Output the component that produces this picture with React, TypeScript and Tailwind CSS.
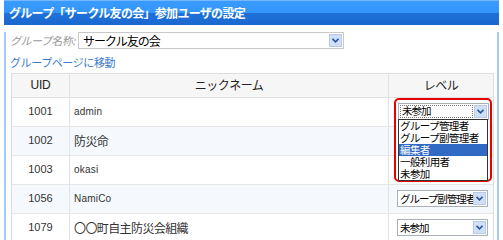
import React from "react";

const JP = "font-['Noto_Sans_CJK_JP','Noto_Sans_CJK_SC',sans-serif]";

const ROWS = [
  { uid: "1001", name: "admin", level: "未参加", open: true },
  { uid: "1002", name: "防災命", level: "" },
  { uid: "1003", name: "okasi", level: "" },
  { uid: "1056", name: "NamiCo", level: "グループ副管理者" },
  { uid: "1079", name: "〇〇町自主防災会組織", level: "未参加" },
];

const OPTIONS = ["グループ管理者", "グループ副管理者", "編集者", "一般利用者", "未参加"];

function Arrow() {
  return (
    <div className="flex h-[13px] w-[13px] shrink-0 items-center justify-center border border-[#b7cbe9] bg-[#cfdff7]">
      <svg width="7" height="5" viewBox="0 0 7 5">
        <path d="M0.5 0.8 L3.5 3.8 L6.5 0.8" fill="none" stroke="#2d55a0" strokeWidth="1.6" />
      </svg>
    </div>
  );
}

function Select({ label, focused }: { label: string; focused?: boolean }) {
  return (
    <div className="flex h-[17px] w-[91px] items-center border border-[#a9b0b9] bg-white pr-[1px]">
      <div
        className={
          "mx-[1px] flex h-[13px] min-w-0 flex-1 items-center whitespace-nowrap pl-[1px] text-[10.5px] leading-[12px] tracking-[-1px] text-black " +
          (focused ? "border border-dotted border-[#777]" : "")
        }
      >
        {label}
      </div>
      <Arrow />
    </div>
  );
}

export default function App() {
  return (
    <div className={"h-[240px] w-[503px] overflow-hidden bg-white text-[#333] " + JP}>
      <div className="ml-[4px] w-[495px]">
        {/* Title bar */}
        <div className="flex h-[25px] items-center border-t border-[#74b8ff] bg-[linear-gradient(#3a9bff_0%,#3396fb_48%,#1f71d9_52%,#1a68cf_100%)] pl-[5px]">
          <span className="whitespace-nowrap text-[12px] font-bold tracking-[-0.7px] text-white">
            グループ「サークル友の会」参加ユーザの設定
          </span>
        </div>

        <div className="h-[215px] border-x-2 border-[#a3cbf3] px-[4px]">
          {/* Group name */}
          <div className="mt-[7px] flex items-center">
            <span className="w-[68px] whitespace-nowrap text-[11px] italic tracking-[-0.5px] text-[#999]">グループ名称:</span>
            <div className="flex h-[17px] w-[266px] items-center border border-[#c8c8c8] bg-white pr-[1px]">
              <span className="flex-1 whitespace-nowrap pl-[4px] text-[12px] tracking-[-1px] text-black">サークル友の会</span>
              <Arrow />
            </div>
          </div>

          <div className="mt-[5px] whitespace-nowrap text-[11px] tracking-[-0.4px] text-[#3a7bd0]">グループページに移動</div>

          {/* Table */}
          <div className="mt-[2px] ml-[1px] w-[483px] border-x border-t border-[#dedede]">
            <div className="grid h-[24px] grid-cols-[58px_319px_104px] border-b border-[#e2e2e2] bg-[#f6f6f6] text-[12px] text-[#222]">
              <div className="flex items-center justify-center border-r border-[#e2e2e2] font-['Liberation_Sans',sans-serif] tracking-[-0.3px]">UID</div>
              <div className="flex items-center justify-center border-r border-[#e2e2e2] tracking-[-0.5px]">ニックネーム</div>
              <div className="flex items-center justify-center tracking-[-0.5px]">レベル</div>
            </div>
            {ROWS.map((r, i) => (
              <div
                key={r.uid}
                className={
                  "grid h-[29px] grid-cols-[58px_319px_104px] border-b border-[#e6e6e6] " +
                  (i % 2 === 1 ? "bg-[#f5f9fd]" : "bg-white")
                }
              >
                <div className="flex items-center justify-center border-r border-[#e2e2e2] font-['Liberation_Sans',sans-serif] text-[11px]">
                  {r.uid}
                </div>
                <div
                  className={
                    "flex items-center whitespace-nowrap border-r border-[#e2e2e2] pl-[4px] " +
                    (/^[A-Za-z]/.test(r.name)
                      ? "font-['Liberation_Sans',sans-serif] text-[10px] tracking-[0.2px]"
                      : "text-[12px] tracking-[-0.6px]")
                  }
                >
                  {r.name}
                </div>
                <div className="relative flex items-center pl-[8px]">
                  {r.level && !r.open && <Select label={r.level} />}
                  {r.open && (
                    <div className="absolute left-[5px] top-[0px] z-10 h-[84px] w-[98px] rounded-[5px] border-2 border-[#e60000] bg-white pl-[2px] pt-[3px]">
                      <div className="w-[87px]">
                        <Select label={r.level} focused />
                      </div>
                      <div className="-mt-[1px] w-[90px] border border-[#333] bg-white">
                        {OPTIONS.map((o) => (
                          <div
                            key={o}
                            className={
                              "h-[12px] whitespace-nowrap pl-[1px] text-[10.5px] leading-[12px] tracking-[-0.6px] " +
                              (o === "編集者" ? "bg-[#316ac5] text-white" : "text-black")
                            }
                          >
                            {o}
                          </div>
                        ))}
                      </div>
                    </div>
                  )}
                </div>
              </div>
            ))}
          </div>
        </div>
      </div>
    </div>
  );
}
